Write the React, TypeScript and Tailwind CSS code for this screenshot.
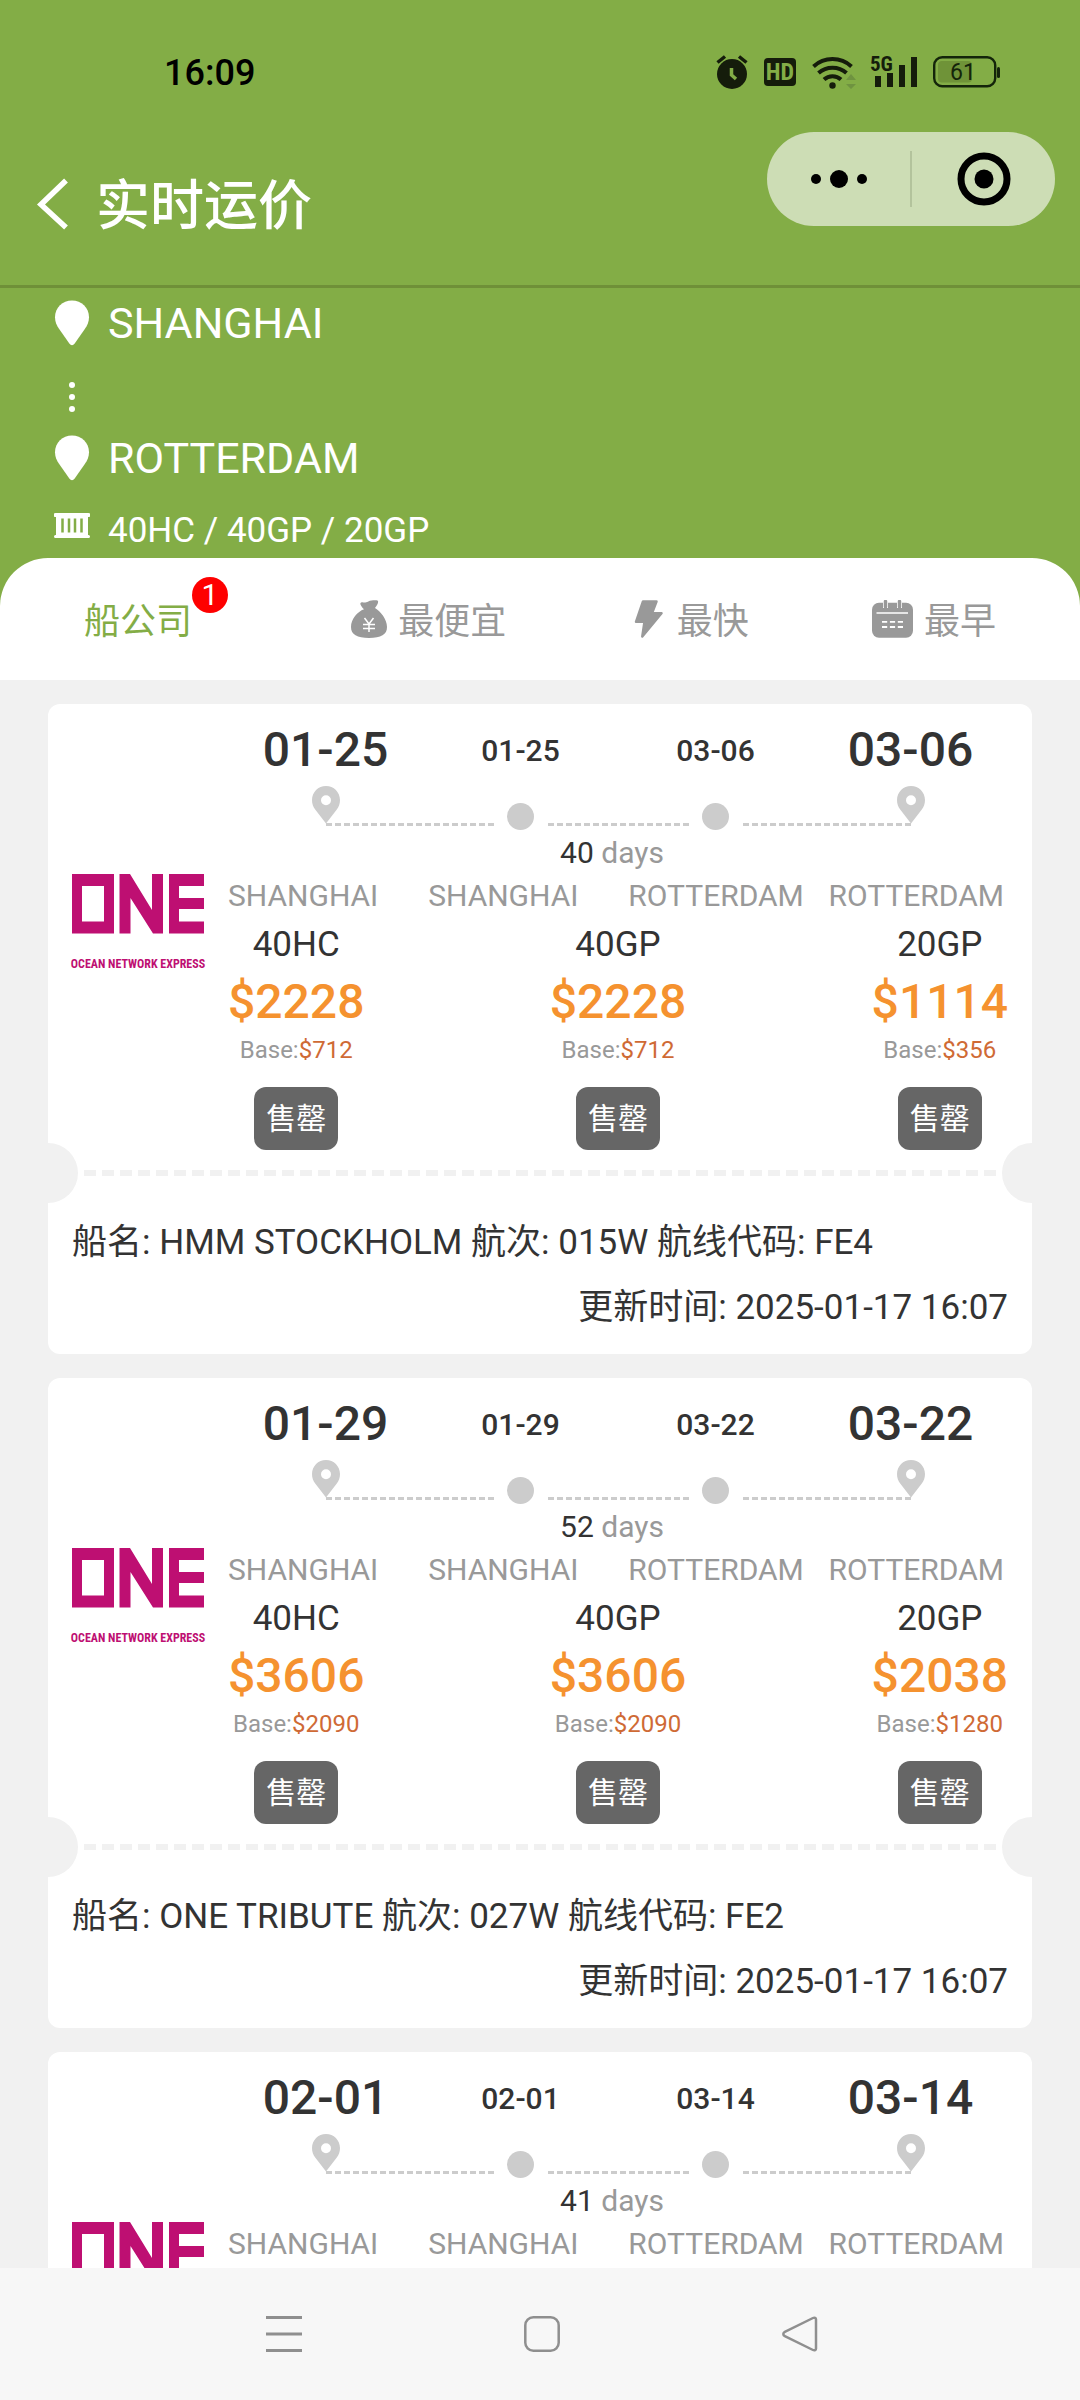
import React from "react";

type Quote = { type: string; price: string; base: string };
type Sailing = {
  departure: string;
  arrival: string;
  days: number;
  quotes?: Quote[];
  vessel?: string;
  updated?: string;
};

const sailings: Sailing[] = [
  {
    departure: "01-25",
    arrival: "03-06",
    days: 40,
    quotes: [
      { type: "40HC", price: "$2228", base: "$712" },
      { type: "40GP", price: "$2228", base: "$712" },
      { type: "20GP", price: "$1114", base: "$356" },
    ],
    vessel: "船名: HMM STOCKHOLM 航次: 015W 航线代码: FE4",
    updated: "更新时间: 2025-01-17 16:07",
  },
  {
    departure: "01-29",
    arrival: "03-22",
    days: 52,
    quotes: [
      { type: "40HC", price: "$3606", base: "$2090" },
      { type: "40GP", price: "$3606", base: "$2090" },
      { type: "20GP", price: "$2038", base: "$1280" },
    ],
    vessel: "船名: ONE TRIBUTE 航次: 027W 航线代码: FE2",
    updated: "更新时间: 2025-01-17 16:07",
  },
  { departure: "02-01", arrival: "03-14", days: 41 },
];

function StatusBar() {
  return (
    <div className="flex h-[100px] items-center justify-between pt-11 pr-20 pl-41 text-[#151c0b]">
      <span className="pt-0.5 text-4xl font-medium text-black">16:09</span>
      <div className="flex items-center gap-4">
        <svg width="32" height="36" viewBox="0 0 32 36" aria-label="alarm">
          <circle cx="16" cy="20" r="15" fill="currentColor" />
          <path d="M1.500 8.500 9 2.500M30.500 8.500 23 2.500" stroke="currentColor" strokeWidth="3.500" />
          <path d="M15.500 14v7l4.500 4" stroke="#83ad46" strokeWidth="3.500" fill="none" />
        </svg>
        <span className="flex h-7 w-8 items-center justify-center rounded-sm bg-[#151c0b] font-['Roboto_Condensed','Liberation_Sans_Narrow',Roboto,sans-serif] text-2xl leading-7 font-bold text-[#83ad46]">
          HD
        </span>
        <svg width="45" height="36" viewBox="0 0 45 36" aria-label="wifi">
          <g fill="none" stroke="currentColor" strokeWidth="4">
            <path d="M1.500 12.500A28 28 0 0 1 39.500 12.500" />
            <path d="M6.500 19A21 21 0 0 1 34.500 19" />
            <path d="M12 25.500A12.500 12.500 0 0 1 29 25.500" />
          </g>
          <circle cx="20.500" cy="31.500" r="3.200" fill="currentColor" />
          <path d="M34 26l5-6 5 6zM34 30l5 5 5-5z" fill="#6f9340" />
        </svg>
        <svg className="-ml-1" width="48" height="48" viewBox="-2 -6 48 48" aria-label="5G">
          <text x="-1" y="17" fontSize="21" fontWeight="700" fill="currentColor" fontFamily="Roboto Condensed, Liberation Sans Narrow, Roboto, sans-serif">
            5G
          </text>
          <path d="M4 22h6v11H4zM16 19h6v14h-6zM28 11h6v22h-6zM40 3h6v30h-6z" fill="currentColor" />
        </svg>
        <svg width="67" height="32" viewBox="0 0 67 32" aria-label="battery 61%">
          <rect x="1.200" y="1.200" width="61" height="29" rx="8" fill="none" stroke="#14250a" strokeWidth="2.400" />
          <rect x="5" y="5" width="34" height="21.500" rx="4" fill="#6f9338" />
          <rect x="64" y="11" width="3" height="11" rx="1.500" fill="#14250a" />
          <text x="30" y="24" fontSize="23" textAnchor="middle" fill="#14250a">
            61
          </text>
        </svg>
      </div>
    </div>
  );
}

function NavBar() {
  return (
    <div className="flex h-[188px] items-start justify-between border-b-3 border-[#6f9038] pt-8 pr-[25px] pl-9 text-white">
      <div className="mt-10 flex h-16 items-center gap-[26px]">
        <button type="button" aria-label="返回">
          <svg width="34" height="52" viewBox="0 0 34 52" fill="none" stroke="currentColor" strokeWidth="5.500">
            <path d="M30 2.500 5 26.500 30 49.500" />
          </svg>
        </button>
        <h1 className="pt-1.5 text-[54px] leading-16 font-medium">实时运价</h1>
      </div>
      <div className="flex h-[94px] w-72 items-center rounded-full bg-[#cdddb5] text-black">
        <button type="button" aria-label="更多" className="flex flex-1 justify-center">
          <svg width="58" height="20" viewBox="0 0 58 20" fill="currentColor">
            <circle cx="6" cy="10" r="5" />
            <circle cx="29" cy="10" r="9" />
            <circle cx="52" cy="10" r="5" />
          </svg>
        </button>
        <span className="h-14 w-0.5 bg-[#b3c39c]" />
        <button type="button" aria-label="关闭" className="flex flex-1 justify-center">
          <svg width="54" height="54" viewBox="0 0 54 54">
            <circle cx="27" cy="27" r="23" fill="none" stroke="currentColor" strokeWidth="7" />
            <circle cx="27" cy="27" r="9.500" fill="currentColor" />
          </svg>
        </button>
      </div>
    </div>
  );
}

function RoutePin() {
  return (
    <svg width="36" height="46" viewBox="0 0 36 46" fill="currentColor">
      <path d="M18 .5C8.600.5 1 7.800 1 17.200c0 4.600 1.700 8 4 11.600l10.500 15c1.300 1.800 3.700 1.800 5 0l10.500-15c2.300-3.600 4-7 4-11.600C35 7.800 27.400.5 18 .5z" />
    </svg>
  );
}

function RouteSummary() {
  return (
    <section className="px-[54px] pt-[3px] text-white">
      <div className="flex h-16 items-center gap-[18px]">
        <RoutePin />
        <span className="text-[43px]">SHANGHAI</span>
      </div>
      <div className="flex h-[71px] w-9 flex-col items-center justify-end gap-1.5 pb-3.5">
        <i className="size-1.5 rounded-full bg-white" />
        <i className="size-1.5 rounded-full bg-white" />
        <i className="size-1.5 rounded-full bg-white" />
      </div>
      <div className="flex h-16 items-center gap-[18px]">
        <RoutePin />
        <span className="text-[43px]">ROTTERDAM</span>
      </div>
      <div className="flex h-[68px] items-start gap-[18px] pt-3.5">
        <svg className="mt-2" width="36" height="36" viewBox="0 0 36 36">
          <path d="M1.500 1h33a1.500 1.500 0 0 1 0 4H34v18h.5a1.500 1.500 0 0 1 0 3h-33a1.500 1.500 0 0 1 0-3H2V5h-.5a1.500 1.500 0 0 1 0-4z" fill="currentColor" />
          <path d="M8.500 6.500v14M15 6.500v14M21 6.500v14M27.500 6.500v14" stroke="#83ad46" strokeWidth="2.500" />
        </svg>
        <span className="text-[35px] leading-[54px]">40HC / 40GP / 20GP</span>
      </div>
    </section>
  );
}

function BagIcon() {
  return (
    <svg width="36" height="38" viewBox="0 0 36 38" fill="currentColor">
      <path d="M9.500 4.500c-.6-1.500.3-2.500 1.800-2.300 2.700.4 3.700.2 6-.8C20 .2 23 .2 25.500.3c1.500.1 1.900 1.200 1.500 2.500-.5 1.600-1.500 3.300-3 5.200 5.500 3.500 12 11 12 19 0 7.500-6 11-18 11S0 34.500 0 27C0 19 6.500 11.500 13 9.200 11.500 8 10.200 6.300 9.500 4.500z" />
      <path d="M13.500 18l4.500 6 4.500-6M18 24v8M12 24.500h12M12 28.500h12" stroke="#fff" strokeWidth="1.500" fill="none" />
    </svg>
  );
}

function BoltIcon() {
  return (
    <svg width="36" height="38" viewBox="0 0 36 38" fill="currentColor" stroke="currentColor" strokeWidth="2.500" strokeLinejoin="round">
      <path d="M13 1.500h13.500L22 13.300h9.500L12.300 36.500 14.500 21.800H6z" />
    </svg>
  );
}

function CalendarIcon() {
  return (
    <svg width="41" height="38" viewBox="0 0 41 38">
      <rect x="0" y="2.800" width="41" height="35" rx="7" fill="currentColor" />
      <path d="M13.500 2v6M27.500 2v6" stroke="#fff" strokeWidth="5" strokeLinecap="butt" />
      <path d="M13.500 1.500v5.500M27.500 1.500v5.500" stroke="currentColor" strokeWidth="3.500" strokeLinecap="round" />
      <path d="M4.500 13h31.500" stroke="#fff" strokeWidth="1.500" />
      <path d="M10 21.800h21M10 27h21" stroke="#fff" strokeWidth="1.800" strokeDasharray="5.200 2.700" />
    </svg>
  );
}

const tabs = [
  { label: "最便宜", icon: <BagIcon /> },
  { label: "最快", icon: <BoltIcon /> },
  { label: "最早", icon: <CalendarIcon /> },
];

function SortTabs() {
  return (
    <nav className="flex h-[122px] items-center justify-between rounded-t-[48px] bg-white px-[84px] text-4xl text-[#999]">
      <button type="button" className="flex h-[84px] items-center text-[#83ad46]">
        <span className="pt-1.5">船公司</span>
        <span className="flex size-9 items-center justify-center self-start rounded-full bg-[#fe0000] text-3xl text-white">1</span>
      </button>
      {tabs.map((tab) => (
        <button key={tab.label} type="button" className="flex h-[84px] items-center gap-[11px]">
          {tab.icon}
          <span className="pt-1.5">{tab.label}</span>
        </button>
      ))}
    </nav>
  );
}

function OneLogo() {
  return (
    <div className="mt-[158px] w-[132px] flex-none text-[#be0f72]">
      <svg width="132" height="60" viewBox="0 0 132 60" fill="currentColor" aria-label="ONE">
        <path fillRule="evenodd" d="M0 0h42v59.500H0zM10 12v35.500h22V12z" />
        <path d="M47.500 0h10.500L80 36V0h11v59.500H81L58.500 24v35.500h-11z" />
        <path d="M97 0h35v12h-25v12h25v11h-25v12.500h25v12H97z" />
      </svg>
      <p className="mt-[22px] flex justify-center font-['Roboto_Condensed','Liberation_Sans_Narrow',Roboto,sans-serif] text-[12px] leading-4 font-bold whitespace-nowrap">
        OCEAN NETWORK EXPRESS
      </p>
    </div>
  );
}

function StopPin() {
  return (
    <svg className="mt-0.5" width="28" height="38" viewBox="0 0 28 38">
      <path fill="#ccc" fillRule="evenodd" d="M14 0C6.200 0 0 6.200 0 14c0 4 1.200 6.800 3.200 9.500L14 37.500l10.800-14C26.800 20.800 28 18 28 14 28 6.200 21.800 0 14 0zM14 9.200a5 5 0 1 1 0 10 5 5 0 0 1 0-10z" />
    </svg>
  );
}

const dash =
  "h-[3px] bg-[repeating-linear-gradient(90deg,#ccc_0_6px,transparent_6px_9px)]";

function Timeline({ departure, arrival }: { departure: string; arrival: string }) {
  return (
    <>
      <div className="grid h-[68px] grid-cols-4 items-center text-center text-[30px] font-medium">
        <span className="text-5xl">{departure}</span>
        <span>{departure}</span>
        <span>{arrival}</span>
        <span className="text-5xl">{arrival}</span>
      </div>
      <div className="grid h-[46px]">
        <div className="col-start-1 row-start-1 mx-[12.5%] grid grid-cols-3 pt-[39px]">
          <span className={`mr-[27px] ${dash}`} />
          <span className={`mx-[27px] ${dash}`} />
          <span className={`ml-[27px] ${dash}`} />
        </div>
        <div className="col-start-1 row-start-1 grid grid-cols-4 justify-items-center">
          <StopPin />
          <span className="mt-[19px] size-[27px] rounded-full bg-[#ccc]" />
          <span className="mt-[19px] size-[27px] rounded-full bg-[#ccc]" />
          <StopPin />
        </div>
      </div>
    </>
  );
}

function SailingCard({ sailing }: { sailing: Sailing }) {
  return (
    <article className="flex-none overflow-hidden rounded-xl bg-white text-[#333]">
      <div className="flex gap-6 px-6 pt-3 pb-5">
        <OneLogo />
        <div className="min-w-0 flex-1">
          <Timeline departure={sailing.departure} arrival={sailing.arrival} />
          <p className="pr-3 text-center text-[30px] leading-[46px]">
            {sailing.days} <span className="text-[#999]">days</span>
          </p>
          <div className="grid grid-cols-[1fr_1fr_1fr_auto] pr-1 text-[30px] leading-10 text-[#999]">
            <span>SHANGHAI</span>
            <span>SHANGHAI</span>
            <span>ROTTERDAM</span>
            <span>ROTTERDAM</span>
          </div>
          {sailing.quotes && (
            <div className="flex justify-between">
              {sailing.quotes.map((quote) => (
                <div key={quote.type} className="flex flex-col items-center">
                  <span className="text-[35px] leading-[58px]">{quote.type}</span>
                  <span className="text-5xl leading-14 font-medium text-[#f5922f]">{quote.price}</span>
                  <span className="text-2xl leading-10 text-[#999]">
                    Base:<span className="text-[#cf6a35]">{quote.base}</span>
                  </span>
                  <button type="button" className="mt-[17px] rounded-xl bg-[#666] px-3 text-[30px] leading-[63px] text-white">
                    售罄
                  </button>
                </div>
              ))}
            </div>
          )}
        </div>
      </div>
      {sailing.vessel && (
        <>
          <div className="relative flex h-1.5 px-9">
            <span className="absolute -top-[27px] -left-[30px] size-[60px] rounded-full bg-[#f1f1f1]" />
            <span className="flex-1 bg-[repeating-linear-gradient(90deg,#f1f1f1_0_12px,transparent_12px_18px)]" />
            <span className="absolute -top-[27px] -right-[30px] size-[60px] rounded-full bg-[#f1f1f1]" />
          </div>
          <div className="px-6 pt-[34px] pb-3.5 text-[35px] leading-[65px]">
            <p>{sailing.vessel}</p>
            <p className="text-right">{sailing.updated}</p>
          </div>
        </>
      )}
    </article>
  );
}

function SystemNav() {
  return (
    <footer className="h-33 flex-none bg-[#f7f7f7] pl-1">
      <div className="mx-auto grid h-full w-[72%] grid-cols-3 place-items-center text-[#8f8f8f]">
        <button type="button" aria-label="最近任务">
          <svg width="36" height="36" viewBox="0 0 36 36" stroke="currentColor" strokeWidth="3">
            <path d="M0 1.500h36M0 18h36M0 34.500h36" />
          </svg>
        </button>
        <button type="button" aria-label="主屏幕">
          <svg width="36" height="36" viewBox="0 0 36 36" fill="none" stroke="currentColor" strokeWidth="2.500">
            <rect x="1.300" y="1.300" width="33.400" height="33.400" rx="8" />
          </svg>
        </button>
        <button type="button" aria-label="返回上一级">
          <svg width="36" height="36" viewBox="0 0 36 36" fill="none" stroke="currentColor" strokeWidth="2.500">
            <path d="M31 2 2.800 15.800c-2 1-2 3.400 0 4.400L31 34c1.600.8 3 0 3-1.500v-29C34 2 32.600 1.200 31 2z" />
          </svg>
        </button>
      </div>
    </footer>
  );
}

export default function App() {
  return (
    <div className="flex h-screen flex-col bg-[#f1f1f1] font-[Roboto,'Noto_Sans_CJK_SC',sans-serif]">
      <header className="flex-none bg-[#83ad46]">
        <StatusBar />
        <NavBar />
        <RouteSummary />
        <SortTabs />
      </header>
      <main className="flex min-h-0 flex-1 flex-col gap-6 overflow-y-auto px-12 pt-6 [scrollbar-width:none]">
        {sailings.map((sailing) => (
          <SailingCard key={sailing.departure} sailing={sailing} />
        ))}
      </main>
      <SystemNav />
    </div>
  );
}
